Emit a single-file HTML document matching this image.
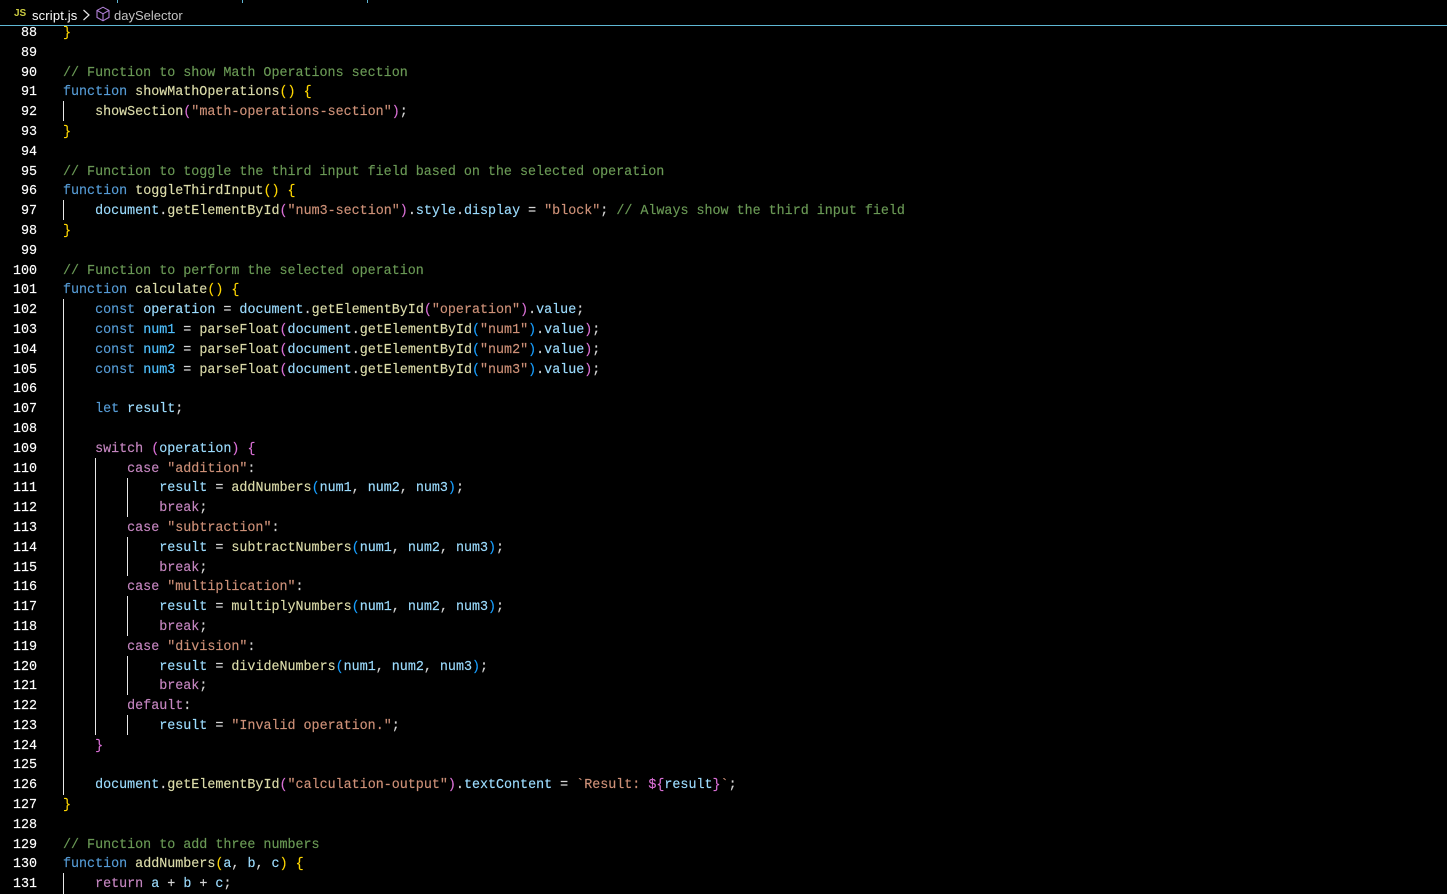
<!DOCTYPE html>
<html><head><meta charset="utf-8"><style>
html,body{margin:0;padding:0;background:#000;width:1447px;height:894px;overflow:hidden}
body{position:relative}
#code{position:absolute;left:0;top:24px;width:1447px;font:13.37px/19.81px "Liberation Mono",monospace;color:#d4d4d4;-webkit-text-stroke:.15px currentColor}
.l{height:19.81px;padding-left:63px;position:relative;white-space:pre}
.l i{position:absolute;left:0;width:37px;text-align:right;font-style:normal;color:#fff}
.c{color:#6a9955}.k{color:#569cd6}.f{color:#dcdcaa}.v{color:#9cdcfe}.s{color:#ce9178}.p{color:#c586c0}.g{color:#ffd700}.o{color:#da70d6}.b{color:#179fff}.n{color:#4fc1ff}
.r{position:absolute;width:1px;background:#e8e8e8}
#bar{position:absolute;left:0;top:0;width:1447px;height:25px;background:#000;border-bottom:1px solid #5fb7d4;z-index:2}
.t{position:absolute;top:0;width:1px;height:3px;background:#5fb7d4}
.bc{position:absolute;top:7px;font:13px/17px "Liberation Sans",sans-serif}
</style></head><body>
<div id="code">
<div class="l"><i>88</i><span class="g">}</span></div>
<div class="l"><i>89</i></div>
<div class="l"><i>90</i><span class="c">// Function to show Math Operations section</span></div>
<div class="l"><i>91</i><span class="k">function</span> <span class="f">showMathOperations</span><span class="g">()</span> <span class="g">{</span></div>
<div class="l"><i>92</i>    <span class="f">showSection</span><span class="o">(</span><span class="s">"math-operations-section"</span><span class="o">)</span>;</div>
<div class="l"><i>93</i><span class="g">}</span></div>
<div class="l"><i>94</i></div>
<div class="l"><i>95</i><span class="c">// Function to toggle the third input field based on the selected operation</span></div>
<div class="l"><i>96</i><span class="k">function</span> <span class="f">toggleThirdInput</span><span class="g">()</span> <span class="g">{</span></div>
<div class="l"><i>97</i>    <span class="v">document</span>.<span class="f">getElementById</span><span class="o">(</span><span class="s">"num3-section"</span><span class="o">)</span>.<span class="v">style</span>.<span class="v">display</span> = <span class="s">"block"</span>; <span class="c">// Always show the third input field</span></div>
<div class="l"><i>98</i><span class="g">}</span></div>
<div class="l"><i>99</i></div>
<div class="l"><i>100</i><span class="c">// Function to perform the selected operation</span></div>
<div class="l"><i>101</i><span class="k">function</span> <span class="f">calculate</span><span class="g">()</span> <span class="g">{</span></div>
<div class="l"><i>102</i>    <span class="k">const</span> <span class="v">operation</span> = <span class="v">document</span>.<span class="f">getElementById</span><span class="o">(</span><span class="s">"operation"</span><span class="o">)</span>.<span class="v">value</span>;</div>
<div class="l"><i>103</i>    <span class="k">const</span> <span class="n">num1</span> = <span class="f">parseFloat</span><span class="o">(</span><span class="v">document</span>.<span class="f">getElementById</span><span class="b">(</span><span class="s">"num1"</span><span class="b">)</span>.<span class="v">value</span><span class="o">)</span>;</div>
<div class="l"><i>104</i>    <span class="k">const</span> <span class="n">num2</span> = <span class="f">parseFloat</span><span class="o">(</span><span class="v">document</span>.<span class="f">getElementById</span><span class="b">(</span><span class="s">"num2"</span><span class="b">)</span>.<span class="v">value</span><span class="o">)</span>;</div>
<div class="l"><i>105</i>    <span class="k">const</span> <span class="n">num3</span> = <span class="f">parseFloat</span><span class="o">(</span><span class="v">document</span>.<span class="f">getElementById</span><span class="b">(</span><span class="s">"num3"</span><span class="b">)</span>.<span class="v">value</span><span class="o">)</span>;</div>
<div class="l"><i>106</i></div>
<div class="l"><i>107</i>    <span class="k">let</span> <span class="v">result</span>;</div>
<div class="l"><i>108</i></div>
<div class="l"><i>109</i>    <span class="p">switch</span> <span class="o">(</span><span class="v">operation</span><span class="o">)</span> <span class="o">{</span></div>
<div class="l"><i>110</i>        <span class="p">case</span> <span class="s">"addition"</span>:</div>
<div class="l"><i>111</i>            <span class="v">result</span> = <span class="f">addNumbers</span><span class="b">(</span><span class="v">num1</span>, <span class="v">num2</span>, <span class="v">num3</span><span class="b">)</span>;</div>
<div class="l"><i>112</i>            <span class="p">break</span>;</div>
<div class="l"><i>113</i>        <span class="p">case</span> <span class="s">"subtraction"</span>:</div>
<div class="l"><i>114</i>            <span class="v">result</span> = <span class="f">subtractNumbers</span><span class="b">(</span><span class="v">num1</span>, <span class="v">num2</span>, <span class="v">num3</span><span class="b">)</span>;</div>
<div class="l"><i>115</i>            <span class="p">break</span>;</div>
<div class="l"><i>116</i>        <span class="p">case</span> <span class="s">"multiplication"</span>:</div>
<div class="l"><i>117</i>            <span class="v">result</span> = <span class="f">multiplyNumbers</span><span class="b">(</span><span class="v">num1</span>, <span class="v">num2</span>, <span class="v">num3</span><span class="b">)</span>;</div>
<div class="l"><i>118</i>            <span class="p">break</span>;</div>
<div class="l"><i>119</i>        <span class="p">case</span> <span class="s">"division"</span>:</div>
<div class="l"><i>120</i>            <span class="v">result</span> = <span class="f">divideNumbers</span><span class="b">(</span><span class="v">num1</span>, <span class="v">num2</span>, <span class="v">num3</span><span class="b">)</span>;</div>
<div class="l"><i>121</i>            <span class="p">break</span>;</div>
<div class="l"><i>122</i>        <span class="p">default</span>:</div>
<div class="l"><i>123</i>            <span class="v">result</span> = <span class="s">"Invalid operation."</span>;</div>
<div class="l"><i>124</i>    <span class="o">}</span></div>
<div class="l"><i>125</i></div>
<div class="l"><i>126</i>    <span class="v">document</span>.<span class="f">getElementById</span><span class="o">(</span><span class="s">"calculation-output"</span><span class="o">)</span>.<span class="v">textContent</span> = <span class="s">`Result: </span><span class="o">${</span><span class="v">result</span><span class="o">}</span><span class="s">`</span>;</div>
<div class="l"><i>127</i><span class="g">}</span></div>
<div class="l"><i>128</i></div>
<div class="l"><i>129</i><span class="c">// Function to add three numbers</span></div>
<div class="l"><i>130</i><span class="k">function</span> <span class="f">addNumbers</span><span class="g">(</span><span class="v">a</span>, <span class="v">b</span>, <span class="v">c</span><span class="g">)</span> <span class="g">{</span></div>
<div class="l"><i>131</i>    <span class="p">return</span> <span class="v">a</span> + <span class="v">b</span> + <span class="v">c</span>;</div>
</div>

<div class="r" style="left:63px;top:101px;height:20px"></div>
<div class="r" style="left:63px;top:200px;height:20px"></div>
<div class="r" style="left:63px;top:299px;height:496px"></div>
<div class="r" style="left:63px;top:873px;height:21px"></div>
<div class="r" style="left:95px;top:458px;height:277px"></div>
<div class="r" style="left:127px;top:478px;height:39px"></div>
<div class="r" style="left:127px;top:537px;height:39px"></div>
<div class="r" style="left:127px;top:596px;height:40px"></div>
<div class="r" style="left:127px;top:656px;height:39px"></div>
<div class="r" style="left:127px;top:715px;height:20px"></div>

<div id="bar">
<div class="t" style="left:117px"></div>
<div class="t" style="left:242px"></div>
<div class="t" style="left:367px"></div>
<div class="bc" style="left:14px;top:8px;font:bold 10px/12px 'Liberation Sans',sans-serif;color:#cbcb41">JS</div>
<div class="bc" style="left:32px;color:#fff;letter-spacing:.15px">script.js</div>
<svg style="position:absolute;left:81px;top:8px" width="10" height="14" viewBox="0 0 10 14"><path d="M2.5 2 L8 7 L2.5 12" fill="none" stroke="#e6e6e6" stroke-width="1.2"/></svg>
<svg style="position:absolute;left:95px;top:6px" width="16" height="16" viewBox="0 0 16 16" fill="none" stroke="#b180d7" stroke-width="1.1"><path d="M8 1.2 L14 4.4 V11.4 L8 14.8 L2 11.4 V4.4 Z"/><path d="M2 4.4 L8 7.8 L14 4.4 M8 7.8 V14.8"/></svg>
<div class="bc" style="left:114px;color:#c4c4c4">daySelector</div>
</div>
</body></html>
